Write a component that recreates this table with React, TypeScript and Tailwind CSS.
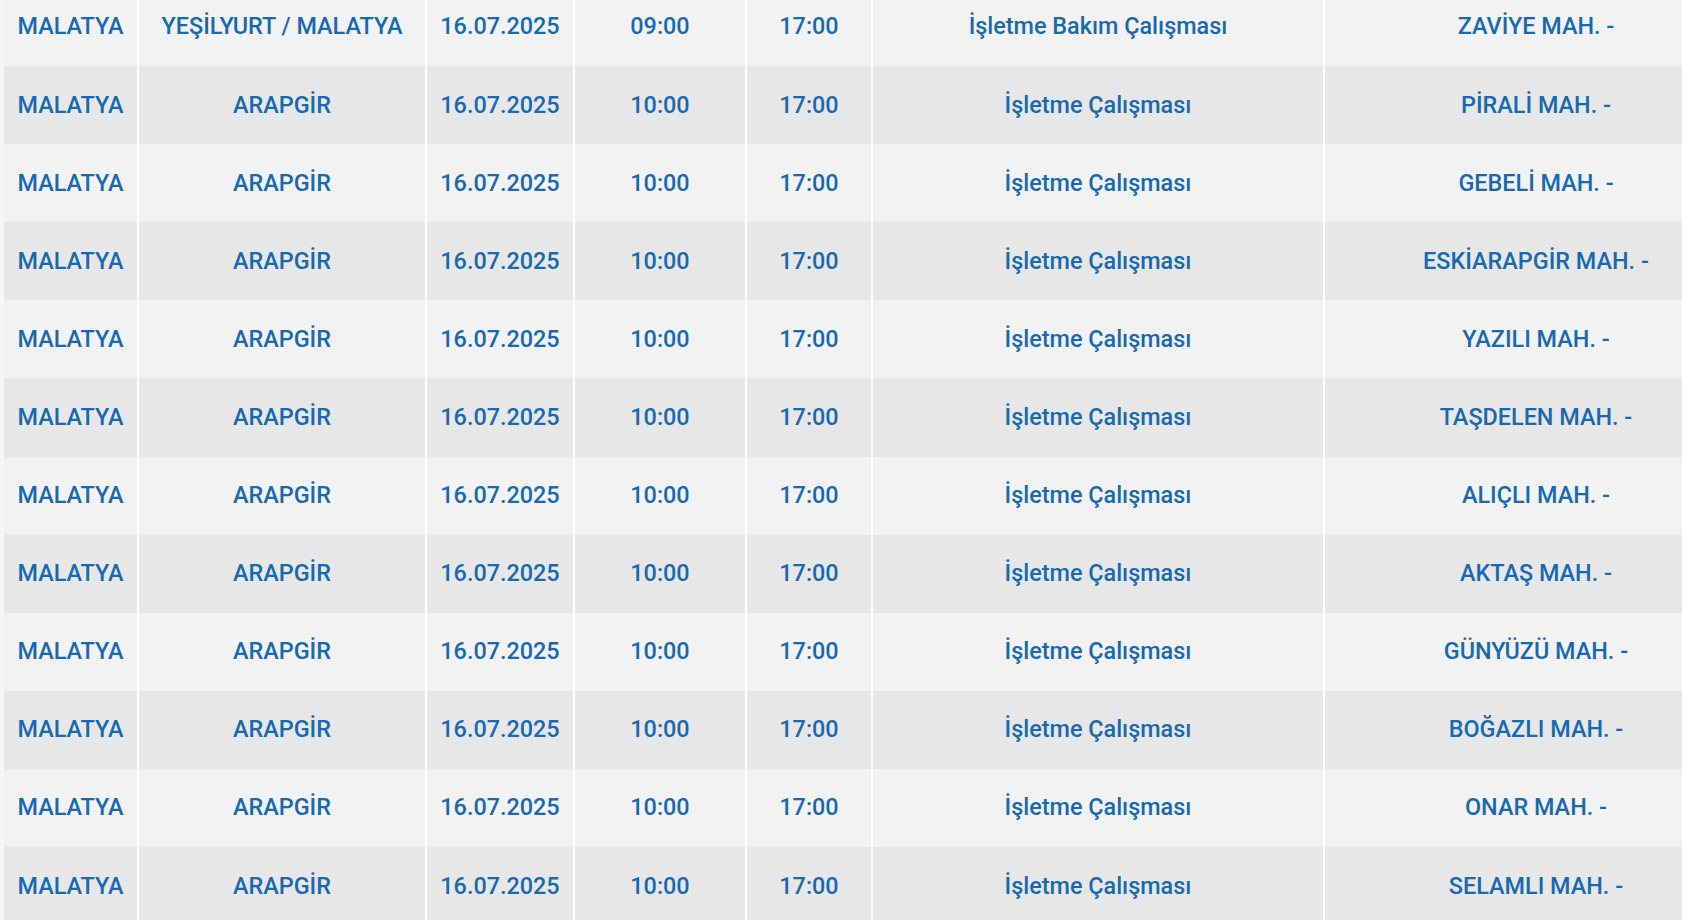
import React from 'react';

interface OutageRow {
  city: string;
  district: string;
  date: string;
  start: string;
  end: string;
  reason: string;
  area: string;
}

const rows: OutageRow[] = [
  { city: 'MALATYA', district: 'YEŞİLYURT / MALATYA', date: '16.07.2025', start: '09:00', end: '17:00', reason: 'İşletme Bakım Çalışması', area: 'ZAVİYE MAH. -' },
  { city: 'MALATYA', district: 'ARAPGİR', date: '16.07.2025', start: '10:00', end: '17:00', reason: 'İşletme Çalışması', area: 'PİRALİ MAH. -' },
  { city: 'MALATYA', district: 'ARAPGİR', date: '16.07.2025', start: '10:00', end: '17:00', reason: 'İşletme Çalışması', area: 'GEBELİ MAH. -' },
  { city: 'MALATYA', district: 'ARAPGİR', date: '16.07.2025', start: '10:00', end: '17:00', reason: 'İşletme Çalışması', area: 'ESKİARAPGİR MAH. -' },
  { city: 'MALATYA', district: 'ARAPGİR', date: '16.07.2025', start: '10:00', end: '17:00', reason: 'İşletme Çalışması', area: 'YAZILI MAH. -' },
  { city: 'MALATYA', district: 'ARAPGİR', date: '16.07.2025', start: '10:00', end: '17:00', reason: 'İşletme Çalışması', area: 'TAŞDELEN MAH. -' },
  { city: 'MALATYA', district: 'ARAPGİR', date: '16.07.2025', start: '10:00', end: '17:00', reason: 'İşletme Çalışması', area: 'ALIÇLI MAH. -' },
  { city: 'MALATYA', district: 'ARAPGİR', date: '16.07.2025', start: '10:00', end: '17:00', reason: 'İşletme Çalışması', area: 'AKTAŞ MAH. -' },
  { city: 'MALATYA', district: 'ARAPGİR', date: '16.07.2025', start: '10:00', end: '17:00', reason: 'İşletme Çalışması', area: 'GÜNYÜZÜ MAH. -' },
  { city: 'MALATYA', district: 'ARAPGİR', date: '16.07.2025', start: '10:00', end: '17:00', reason: 'İşletme Çalışması', area: 'BOĞAZLI MAH. -' },
  { city: 'MALATYA', district: 'ARAPGİR', date: '16.07.2025', start: '10:00', end: '17:00', reason: 'İşletme Çalışması', area: 'ONAR MAH. -' },
  { city: 'MALATYA', district: 'ARAPGİR', date: '16.07.2025', start: '10:00', end: '17:00', reason: 'İşletme Çalışması', area: 'SELAMLI MAH. -' },
];

function Cell({ width, children }: { width: string; children: React.ReactNode }) {
  return (
    <div className={`${width} shrink-0 flex items-center justify-center whitespace-nowrap`}>
      {children}
    </div>
  );
}

// thin white column separator
function Sep() {
  return <div className="w-[2px] bg-white shrink-0" />;
}

export default function App() {
  return (
    <div className="w-[1682px] h-[920px] overflow-hidden bg-[#f7f7f7]">
      <div
        className="-mt-[12px] pl-[4px] flex flex-col text-[23.4px] font-medium text-[#1769b0]"
        style={{ fontFamily: 'Roboto, "Noto Sans", sans-serif' }}
      >
        {rows.map((r, i) => (
          <div
            key={i}
            className={`flex h-[78.1px] ${i % 2 === 0 ? 'bg-[#f2f2f2]' : 'bg-[#e7e7e7]'}`}
          >
            <Cell width="w-[133px]">{r.city}</Cell>
            <Sep />
            <Cell width="w-[286px]">{r.district}</Cell>
            <Sep />
            <Cell width="w-[146px]">{r.date}</Cell>
            <Sep />
            <Cell width="w-[170px]">{r.start}</Cell>
            <Sep />
            <Cell width="w-[124px]">{r.end}</Cell>
            <Sep />
            <Cell width="w-[450px]">{r.reason}</Cell>
            <Sep />
            <Cell width="w-[422px]">{r.area}</Cell>
          </div>
        ))}
      </div>
    </div>
  );
}
